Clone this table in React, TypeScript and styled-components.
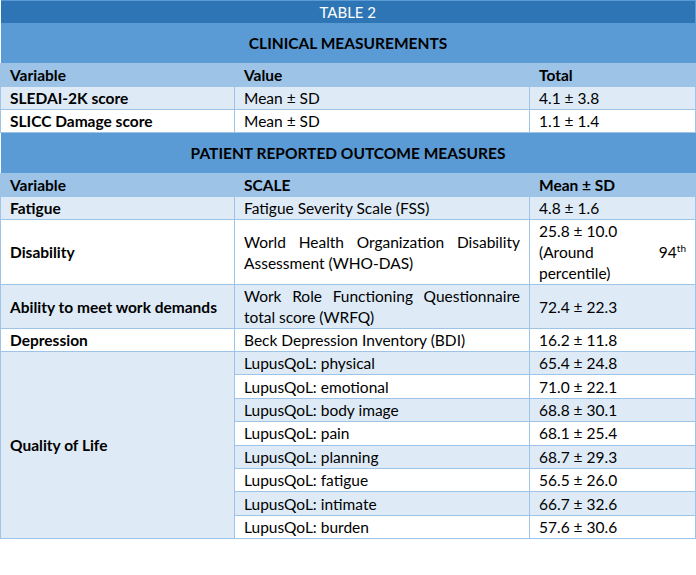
import { createGlobalStyle } from "styled-components";
import styled from "styled-components";

const GlobalStyle = createGlobalStyle`
    body {
        margin: 0;
        background: #ffffff;
    }
`;

const line = "#9dc3e6";
const light = "#deebf7";

type Col = 1 | 2 | 3;

interface DataRow {
    label?: string;
    scale: React.ReactNode;
    value: React.ReactNode;
    shade: boolean;
    justify?: boolean;
}

const clinical: Array<DataRow> = [
    { label: "SLEDAI-2K score", scale: "Mean ± SD", value: "4.1 ± 3.8", shade: true },
    { label: "SLICC Damage score", scale: "Mean ± SD", value: "1.1 ± 1.4", shade: false },
];

const reported: Array<DataRow> = [
    { label: "Fatigue", scale: "Fatigue Severity Scale (FSS)", value: "4.8 ± 1.6", shade: true },
    {
        label: "Disability",
        scale: "World Health Organization Disability Assessment (WHO-DAS)",
        value: (
            <>
                25.8 ± 10.0
                <br />
                (Around 94<sup>th</sup> percentile)
            </>
        ),
        shade: false,
        justify: true,
    },
    {
        label: "Ability to meet work demands",
        scale: "Work Role Functioning Questionnaire total score (WRFQ)",
        value: "72.4 ± 22.3",
        shade: true,
        justify: true,
    },
    { label: "Depression", scale: "Beck Depression Inventory (BDI)", value: "16.2 ± 11.8", shade: false },
];

const quality: Array<[string, string]> = [
    ["physical", "65.4 ± 24.8"],
    ["emotional", "71.0 ± 22.1"],
    ["body image", "68.8 ± 30.1"],
    ["pain", "68.1 ± 25.4"],
    ["planning", "68.7 ± 29.3"],
    ["fatigue", "56.5 ± 26.0"],
    ["intimate", "66.7 ± 32.6"],
    ["burden", "57.6 ± 30.6"],
];

export default function App() {
    return (
        <>
            <GlobalStyle />
            <Table>
                <colgroup>
                    <col style={{ width: 234 }} />
                    <col style={{ width: 295 }} />
                    <col style={{ width: 166 }} />
                </colgroup>
                <tbody>
                    <tr>
                        <TitleCell colSpan={3}>TABLE 2</TitleCell>
                    </tr>
                    <tr>
                        <SectionCell colSpan={3}>CLINICAL MEASUREMENTS</SectionCell>
                    </tr>
                    <tr>
                        <HeadCell $col={1}>Variable</HeadCell>
                        <HeadCell $col={2}>Value</HeadCell>
                        <HeadCell $col={3}>Total</HeadCell>
                    </tr>
                    {clinical.map(function (row) {
                        return (
                            <tr key={row.label}>
                                <Cell $col={1} $shade={row.shade} $bold>{row.label}</Cell>
                                <Cell $col={2} $shade={row.shade}>{row.scale}</Cell>
                                <Cell $col={3} $shade={row.shade}>{row.value}</Cell>
                            </tr>
                        );
                    })}
                    <tr>
                        <SectionCell colSpan={3}>PATIENT REPORTED OUTCOME MEASURES</SectionCell>
                    </tr>
                    <tr>
                        <HeadCell $col={1}>Variable</HeadCell>
                        <HeadCell $col={2}>SCALE</HeadCell>
                        <HeadCell $col={3}>Mean ± SD</HeadCell>
                    </tr>
                    {reported.map(function (row) {
                        return (
                            <tr key={row.label}>
                                <Cell $col={1} $shade={row.shade} $bold>{row.label}</Cell>
                                <Cell $col={2} $shade={row.shade} $justify={row.justify}>{row.scale}</Cell>
                                <Cell $col={3} $shade={row.shade} $justify={row.justify}>{row.value}</Cell>
                            </tr>
                        );
                    })}
                    {quality.map(function ([name, value], i) {
                        const shade = i % 2 === 0;
                        return (
                            <tr key={name}>
                                {i === 0 && (
                                    <Cell $col={1} $shade $bold rowSpan={quality.length}>Quality of Life</Cell>
                                )}
                                <Cell $col={2} $shade={shade} $tall>LupusQoL: {name}</Cell>
                                <Cell $col={3} $shade={shade} $tall>{value}</Cell>
                            </tr>
                        );
                    })}
                </tbody>
            </Table>
        </>
    );
}

const Table = styled.table`
    width: 695px;
    border-collapse: collapse;
    table-layout: fixed;
    font-family: Lato, "Liberation Sans", sans-serif;
    font-size: 15.5px;
    color: #000000;
`;

const TitleCell = styled.th`
    height: 22px;
    padding: 0;
    background: #2e75b6;
    border-top: 1px solid #5b9bd5;
    border-right: 1px solid #5b9bd5;
    color: #ffffff;
    font-weight: 400;
    font-size: 15px;
    text-align: center;
    line-height: 20px;
`;

const SectionCell = styled.th`
    height: 40px;
    padding: 0;
    background: #5b9bd5;
    font-weight: 700;
    text-align: center;
`;

const HeadCell = styled.th<{ $col: Col }>`
    height: 24px;
    padding: 0 8px 0 9px;
    background: ${line};
    font-weight: 700;
    text-align: left;
    line-height: 21px;
    border-left: 1px solid ${(p) => (p.$col === 2 ? "#ffffff" : line)};
    border-right: 1px solid ${line};
`;

const Cell = styled.td<{ $col: Col; $shade?: boolean; $bold?: boolean; $justify?: boolean; $tall?: boolean }>`
    height: ${(p) => (p.$tall ? "21.4px" : "21px")};
    padding: 1px 9px 0 9px;
    background: ${(p) => (p.$shade ? light : "#ffffff")};
    font-weight: ${(p) => (p.$bold ? 700 : 400)};
    text-align: ${(p) => (p.$justify ? "justify" : "left")};
    line-height: 21px;
    vertical-align: middle;
    border-bottom: 1px solid ${line};
    border-left: 1px solid ${(p) => (p.$col === 2 ? "#ffffff" : line)};
    border-right: 1px solid ${line};

    sup {
        font-size: 10px;
        line-height: 0;
    }
`;
